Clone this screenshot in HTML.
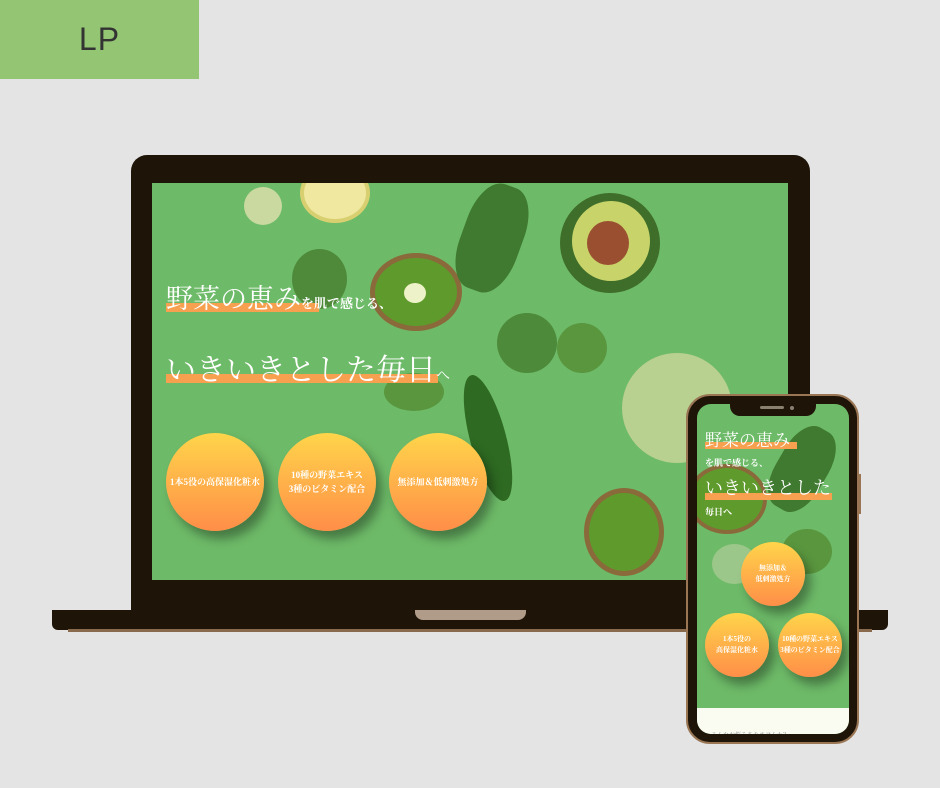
<!DOCTYPE html>
<html><head><meta charset="utf-8"><style>
*{margin:0;padding:0;box-sizing:border-box}
body{width:940px;height:788px;background:#e4e4e4;position:relative;overflow:hidden;font-family:"Liberation Serif","Noto Serif CJK SC",serif}
.abs{position:absolute}
.lp{left:0;top:0;width:199px;height:79px;background:#93c572;color:#333;font:32px "Liberation Sans",sans-serif;text-align:center;line-height:79px;letter-spacing:1px}
.lap{left:131px;top:155px;width:679px;height:460px;background:#1e1408;border-radius:16px 16px 0 0}
.scr{left:152px;top:183px;width:636px;height:397px;background:#6dba68;overflow:hidden}
.base{left:52px;top:610px;width:836px;height:20px;background:#1e1408;border-radius:0 0 6px 6px}
.base2{left:68px;top:629px;width:804px;height:3px;background:#8a6a4c}
.notch{left:415px;top:610px;width:111px;height:10px;background:#b09c88;border-radius:0 0 8px 8px}
.c{border-radius:50%}
.t{color:#fff;white-space:nowrap}
.hl{background:#f7a050;height:9px}
.bub{border-radius:50%;background:linear-gradient(#ffd54a,#ff8e48);color:#fff;display:flex;align-items:center;justify-content:center;text-align:center;font-size:9px;font-weight:bold;line-height:1.6;box-shadow:6px 8px 10px rgba(0,0,0,.35)}
.ph{left:686px;top:394px;width:173px;height:350px;background:#1e1408;border:2px solid #9a7654;border-radius:24px}
.pscr{left:697px;top:404px;width:152px;height:330px;background:#6dba68;border-radius:14px;overflow:hidden}
</style></head><body>
<div class="abs lp">LP</div>
<div class="abs lap"></div>
<div class="abs scr">
 <div class="abs c" style="left:148px;top:-20px;width:70px;height:60px;background:#f0e8a0;border:4px solid #d8d070"></div>
 <div class="abs c" style="left:92px;top:4px;width:38px;height:38px;background:#c9d9a0"></div>
 <div class="abs c" style="left:140px;top:66px;width:55px;height:60px;background:#4e8a3a"></div>
 <div class="abs c" style="left:218px;top:70px;width:92px;height:78px;background:#5f9a2c;border:5px solid #8a6a3a"></div>
 <div class="abs c" style="left:252px;top:100px;width:22px;height:20px;background:#eef2c8"></div>
 <div class="abs" style="left:408px;top:10px;width:100px;height:100px;background:#3f6e2a;border-radius:50% 50% 50% 50%"></div>
 <div class="abs c" style="left:420px;top:18px;width:78px;height:80px;background:#c8d46a"></div>
 <div class="abs c" style="left:435px;top:38px;width:42px;height:44px;background:#9a5030"></div>
 <div class="abs" style="left:310px;top:0;width:60px;height:110px;background:#3f7a30;border-radius:40%;transform:rotate(20deg)"></div>
 <div class="abs c" style="left:345px;top:130px;width:60px;height:60px;background:#4d8a3a"></div>
 <div class="abs c" style="left:405px;top:140px;width:50px;height:50px;background:#5a963e"></div>
 <div class="abs" style="left:318px;top:190px;width:36px;height:130px;background:#2e6a22;border-radius:50%;transform:rotate(-15deg)"></div>
 <div class="abs c" style="left:470px;top:170px;width:110px;height:110px;background:#b8d090"></div>
 <div class="abs c" style="left:432px;top:305px;width:80px;height:88px;background:#5f9a2c;border:5px solid #8a6a3a"></div>
 <div class="abs c" style="left:232px;top:190px;width:60px;height:38px;background:#5a963e"></div>
 <div class="abs hl" style="left:14px;top:120px;width:153px"></div>
 <div class="abs t" style="left:14px;top:94px;font-size:27px">野菜の恵み<span style="font-size:13px;font-weight:bold">を肌で感じる、</span></div>
 <div class="abs hl" style="left:14px;top:191px;width:272px"></div>
 <div class="abs t" style="left:14px;top:162px;font-size:30px">いきいきとした毎日<span style="font-size:14px">へ</span></div>
 <div class="abs bub" style="left:14px;top:250px;width:98px;height:98px">1本5役の高保湿化粧水</div>
 <div class="abs bub" style="left:126px;top:250px;width:98px;height:98px">10種の野菜エキス<br>3種のビタミン配合</div>
 <div class="abs bub" style="left:237px;top:250px;width:98px;height:98px">無添加＆低刺激処方</div>
</div>
<div class="abs base"></div><div class="abs base2"></div><div class="abs notch"></div>
<div class="abs" style="left:857px;top:474px;width:4px;height:40px;background:#9a7654"></div>
<div class="abs ph"></div>
<div class="abs pscr">
 <div class="abs c" style="left:-10px;top:60px;width:80px;height:70px;background:#5f9a2c;border:4px solid #8a6a3a"></div>
 <div class="abs" style="left:80px;top:20px;width:50px;height:90px;background:#3f7a30;border-radius:40%;transform:rotate(30deg)"></div>
 <div class="abs c" style="left:85px;top:125px;width:50px;height:45px;background:#5a963e"></div>
 <div class="abs c" style="left:15px;top:140px;width:45px;height:40px;background:#9cc78a"></div>
 <div class="abs hl" style="left:8px;top:38px;width:92px;height:7px"></div>
 <div class="abs t" style="left:8px;top:22px;font-size:17px">野菜の恵み</div>
 <div class="abs t" style="left:8px;top:52px;font-size:9px;font-weight:bold">を肌で感じる、</div>
 <div class="abs hl" style="left:8px;top:89px;width:127px;height:7px"></div>
 <div class="abs t" style="left:8px;top:70px;font-size:18px">いきいきとした</div>
 <div class="abs t" style="left:8px;top:101px;font-size:9px;font-weight:bold">毎日へ</div>
 <div class="abs bub" style="left:44px;top:138px;width:64px;height:64px;font-size:7px">無添加＆<br>低刺激処方</div>
 <div class="abs bub" style="left:8px;top:209px;width:64px;height:64px;font-size:7px">1本5役の<br>高保湿化粧水</div>
 <div class="abs bub" style="left:81px;top:209px;width:64px;height:64px;font-size:7px">10種の野菜エキス<br>3種のビタミン配合</div>
 <div class="abs" style="left:0;top:304px;width:152px;height:30px;background:#fafcf2"></div>
 <div class="abs" style="left:14px;top:326px;font-size:6px;color:#888">こんなお悩みありませんか？</div>
</div>
<div class="abs" style="left:730px;top:398px;width:86px;height:18px;background:#1e1408;border-radius:0 0 10px 10px"></div>
<div class="abs" style="left:760px;top:406px;width:24px;height:3px;background:#8a8070;border-radius:2px"></div>
<div class="abs c" style="left:790px;top:406px;width:4px;height:4px;background:#8a8070"></div>
</body></html>
